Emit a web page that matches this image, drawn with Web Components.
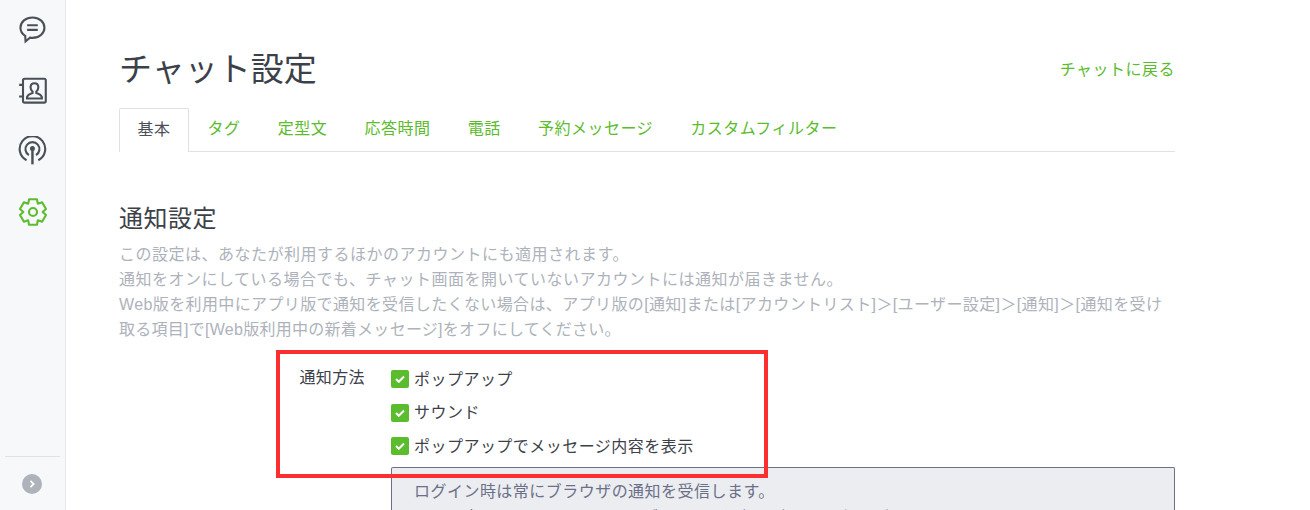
<!DOCTYPE html>
<html lang="ja">
<head>
<meta charset="utf-8">
<title>チャット設定</title>
<style>
  html, body { margin: 0; height: 100%; overflow: hidden; background: #fff; }
  body {
    font-family: "Liberation Sans", "Noto Sans CJK JP", sans-serif;
    color: #3c4149;
  }
</style>
</head>
<body>
<settings-app></settings-app>

<script>
// six rounded teeth, like the settings gear in the reference
function gearPath(cx, cy) {
  let d = '';
  for (let i = 0; i < 6; i++) {
    const a = (-90 + i * 60) * Math.PI / 180;
    const pts = [[-.52, 8.700], [-.3, 12], [.3, 12], [.52, 8.700]];
    pts.forEach(([off, r]) => {
      const x = (cx + Math.cos(a + off) * r).toFixed(2);
      const y = (cy + Math.sin(a + off) * r).toFixed(2);
      d += (d ? 'L' : 'M') + x + ' ' + y;
    });
  }
  return d + 'Z';
}

const ICONS = {
  chat: `<path d="M13 2.200c6 0 10.800 4 10.800 9.200S19 20.600 13 20.600c-.8 0-1.500-.1-2.200-.2L6.800 23.800l-.3-5.100C3.800 17 2.200 14.400 2.200 11.400 2.200 6.200 7 2.200 13 2.200z"/><path d="M8.200 9.200h9.600M8.200 13.400h9.600"/>`,
  contacts: `<rect x="4.500" y="2.500" width="20.500" height="21.500" rx="1.500"/><path d="M1 8h3.500M1 18.500h3.500"/><path d="M14.800 6.500c-2.200 0-3.500 1.600-3.500 3.700 0 1.700.7 3 1.800 3.800v1.200c-2 .6-4.400 1.500-5 3.800v1.200h13.400V19c-.6-2.300-3-3.200-5-3.800V14c1.100-.8 1.800-2.100 1.800-3.800 0-2.100-1.300-3.700-3.500-3.700z"/>`,
  cast: `<path d="M7.700 21.800a11.500 11.500 0 1 1 10.600 0"/><path d="M9.800 17.200a6.300 6.300 0 1 1 6.400 0"/><path d="M13 11.500v14" stroke-width="2.200"/><circle cx="13" cy="11.200" r="1.300" fill="currentColor"/>`,
  gear: `<path d="${gearPath(13.5, 13.5)}" stroke-linejoin="round"/><circle cx="13.500" cy="13.500" r="3.600"/>`
};

class SideIcon extends HTMLElement {
  connectedCallback() {
    const name = this.getAttribute('name');
    this.attachShadow({ mode: 'open' });
    this.shadowRoot.innerHTML = `
      <style>
        :host { display: flex; justify-content: center; align-items: center; width: 30px; height: 60.500px; color: #4b5058; }
        :host([active]) { color: #5bbc2e; }
        svg { width: 30px; height: 30px; fill: none; stroke: currentColor; stroke-width: 1.900; }
      </style>
      <svg viewBox="0 0 27 27">${ICONS[name]}</svg>`;
  }
}
customElements.define('side-icon', SideIcon);

class SideBar extends HTMLElement {
  connectedCallback() {
    this.attachShadow({ mode: 'open' });
    this.shadowRoot.innerHTML = `
      <style>
        :host {
          display: flex; flex-direction: column; align-items: center; box-sizing: border-box;
          width: 66px; flex: none; height: 510px;
          background: #f7f8fa; border-right: 1px solid #e3e5ea;
        }
        .spacer { flex: 1; }
        hr { width: 55px; height: 1px; margin: 0 0 17px; border: 0; background: #dfe1e6; }
        .expand {
          width: 20px; height: 20px; margin: 0 1px 16px 0; border-radius: 50%;
          background: #adb2bb; display: flex; align-items: center; justify-content: center;
        }
        .expand svg { width: 8px; height: 8px; fill: none; stroke: #fff; stroke-width: 1.800; }
      </style>
      <slot></slot>
      <div class="spacer"></div>
      <hr>
      <div class="expand"><svg viewBox="0 0 8 8"><path d="M2.500 .8 5.700 4 2.500 7.200"/></svg></div>`;
  }
}
customElements.define('side-bar', SideBar);

class TabBar extends HTMLElement {
  connectedCallback() {
    this.attachShadow({ mode: 'open' });
    this.shadowRoot.innerHTML = `
      <style>
        :host { display: flex; height: 43px; border-bottom: 1px solid #dfe1e6; font-size: 16px; letter-spacing: .5px; }
        ::slotted(*) { box-sizing: border-box; height: 43px; padding: 10px 18.600px 0; color: #5bbc2e; line-height: 22px; white-space: nowrap; }
        ::slotted(.on) {
          height: 44px; padding: 10px 17.500px 0; color: #4b5058; background: #fff;
          border: 1px solid #dfe1e6; border-bottom: 0; border-radius: 2px 2px 0 0;
        }
      </style>
      <slot></slot>`;
  }
}
customElements.define('tab-bar', TabBar);

class CheckItem extends HTMLElement {
  connectedCallback() {
    this.attachShadow({ mode: 'open' });
    this.shadowRoot.innerHTML = `
      <style>
        :host { display: flex; align-items: center; gap: 5px; height: 24px; font-size: 16px; letter-spacing: .47px; color: #3c4149; white-space: nowrap; }
        .box { width: 18px; height: 18px; flex: none; border-radius: 2px; background: #5bbc2e; display: flex; align-items: center; justify-content: center; }
        svg { width: 10px; height: 8px; fill: none; stroke: #fff; stroke-width: 2; }
        .text { padding-bottom: 3px; }
      </style>
      <span class="box"><svg viewBox="0 0 10 8"><path d="M1 4l2.800 2.800L9 1.500"/></svg></span>
      <span class="text"><slot></slot></span>`;
  }
}
customElements.define('check-item', CheckItem);

class NotifyForm extends HTMLElement {
  connectedCallback() {
    this.attachShadow({ mode: 'open' });
    this.shadowRoot.innerHTML = `
      <style>
        :host { display: grid; grid-template-columns: 272px 1fr; margin-top: 25px; }
        .label { padding: 0 26px 0 0; text-align: right; font-size: 16px; letter-spacing: .4px; line-height: 22px; color: #3c4149; }
        .items { display: flex; flex-direction: column; gap: 9.500px; }
        .note {
          box-sizing: border-box; height: 60px; margin-top: 9px; padding: 11px 22px 0;
          background: #ecedf1; border: 1px solid #6b7088; border-bottom: 0; border-radius: 2px 2px 0 0;
          font-size: 16px; letter-spacing: .47px; line-height: 26px; color: #6b7088; overflow: hidden;
        }
      </style>
      <div class="label"><slot name="label"></slot></div>
      <div>
        <div class="items"><slot></slot></div>
        <div class="note"><slot name="note"></slot></div>
      </div>`;
  }
}
customElements.define('notify-form', NotifyForm);

class HighlightBox extends HTMLElement {
  connectedCallback() {
    this.attachShadow({ mode: 'open' });
    this.shadowRoot.innerHTML = `
      <style>
        :host { position: absolute; left: 276px; top: 350px; width: 492px; height: 128px; box-sizing: border-box; border: 4px solid #fb2f2f; pointer-events: none; }
      </style>`;
  }
}
customElements.define('highlight-box', HighlightBox);

class SettingsApp extends HTMLElement {
  connectedCallback() {
    this.attachShadow({ mode: 'open' });
    this.shadowRoot.innerHTML = `
      <style>
        :host { display: flex; width: 1310px; height: 510px; overflow: hidden; position: relative; }
        main { box-sizing: border-box; width: 1056px; margin-left: 53px; padding-top: 46px; }
        header { display: flex; justify-content: space-between; align-items: center; height: 46px; margin-bottom: 16px; }
        h1 { margin: 0; padding-top: 1px; font-size: 33px; font-weight: 400; line-height: 46px; color: #3c4149; }
        .back { color: #5bbc2e; font-size: 16px; letter-spacing: .5px; margin-top: -3px; }
        h2 { margin: 52px 0 0; font-size: 24px; letter-spacing: .5px; font-weight: 400; line-height: 30px; color: #3c4149; }
        p { margin: 8px 0 0; font-size: 16px; letter-spacing: .5px; line-height: 25px; color: #adb2bb; }
        /* these two lines carry latin runs that are wider here than in the reference */
        .l3 { letter-spacing: .38px; }
        .l4 { letter-spacing: .27px; }
      </style>
      <side-bar>
        <side-icon name="chat"></side-icon>
        <side-icon name="contacts"></side-icon>
        <side-icon name="cast"></side-icon>
        <side-icon name="gear" active></side-icon>
      </side-bar>
      <main>
        <header>
          <h1>チャット設定</h1>
          <span class="back">チャットに戻る</span>
        </header>
        <tab-bar>
          <div class="on">基本</div>
          <div>タグ</div>
          <div>定型文</div>
          <div>応答時間</div>
          <div>電話</div>
          <div>予約メッセージ</div>
          <div>カスタムフィルター</div>
        </tab-bar>
        <h2>通知設定</h2>
        <p>この設定は、あなたが利用するほかのアカウントにも適用されます。<br>通知をオンにしている場合でも、チャット画面を開いていないアカウントには通知が届きません。<br><span class="l3">Web版を利用中にアプリ版で通知を受信したくない場合は、アプリ版の[通知]または[アカウントリスト]＞[ユーザー設定]＞[通知]＞[通知を受け</span><br><span class="l4">取る項目]で[Web版利用中の新着メッセージ]をオフにしてください。</span></p>
        <notify-form>
          <span slot="label">通知方法</span>
          <check-item>ポップアップ</check-item>
          <check-item>サウンド</check-item>
          <check-item>ポップアップでメッセージ内容を表示</check-item>
          <div slot="note">ログイン時は常にブラウザの通知を受信します。<br>この設定をオフにしていても、ブラウザで通知を許可する必要があります。</div>
        </notify-form>
      </main>
      <highlight-box></highlight-box>`;
  }
}
customElements.define('settings-app', SettingsApp);
</script>
</body>
</html>
